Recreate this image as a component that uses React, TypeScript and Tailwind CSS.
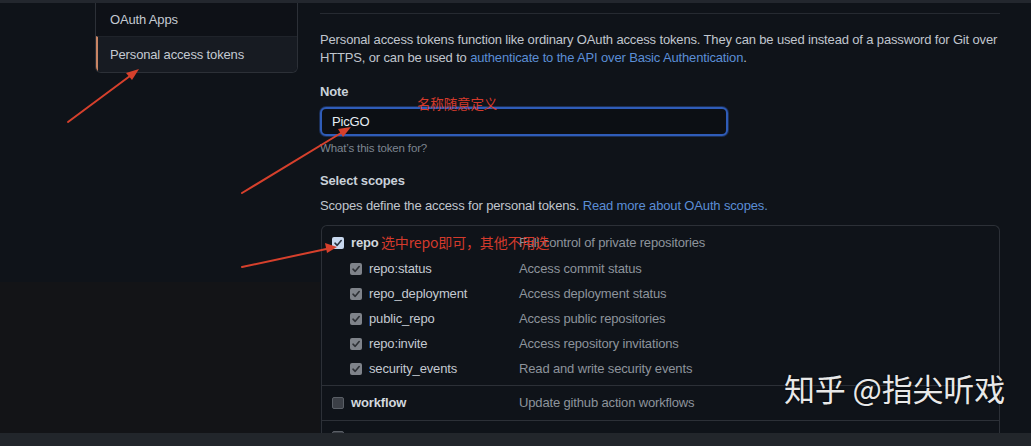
import React from "react";

const font = { fontFamily: '"Segoe UI", "Liberation Sans", "Noto Sans CJK SC", sans-serif' };

function CheckBox({ kind }: { kind: "blue" | "grey" | "empty" }) {
  if (kind === "empty") {
    return <div className="w-[12px] h-[12px] rounded-[2px] bg-[#3b3f46] border border-[#5a5f66]" />;
  }
  const bg = kind === "blue" ? "bg-[#c8d8ee]" : "bg-[#7f838a]";
  const stroke = kind === "blue" ? "#2a3340" : "#2e3136";
  return (
    <div className={`w-[12px] h-[12px] rounded-[2px] ${bg} flex items-center justify-center`}>
      <svg width="10" height="10" viewBox="0 0 10 10">
        <path d="M2 5.2 L4.2 7.3 L8.2 2.6" fill="none" stroke={stroke} strokeWidth="1.6" strokeLinecap="round" strokeLinejoin="round" />
      </svg>
    </div>
  );
}

const subs = [
  ["repo:status", "Access commit status"],
  ["repo_deployment", "Access deployment status"],
  ["public_repo", "Access public repositories"],
  ["repo:invite", "Access repository invitations"],
  ["security_events", "Read and write security events"],
];

export default function App() {
  return (
    <div className="relative w-[1031px] h-[446px] overflow-hidden bg-[#0f1319] text-[#c4cad2] flex flex-col tracking-[-0.15px]" style={font}>
      <div className="h-[3px] bg-[#23272e] shrink-0" />
      <div className="flex-1 flex overflow-hidden">
        {/* left column */}
        <div className="w-[320px] shrink-0 flex flex-col">
          <div className="h-[279px] pl-[95px] pr-[22px]">
            <div className="border border-t-0 border-[#2c3037] rounded-b-[6px] overflow-hidden text-[13px]">
              <div className="h-[33px] flex items-center pl-[14px] bg-[#0e1117] text-[#c4cad2]">OAuth Apps</div>
              <div className="h-[36px] flex items-center pl-[12px] bg-[#171b22] border-t border-[#1f232a] border-l-2 border-l-[#c98564] text-[#c4cad2]">
                Personal access tokens
              </div>
            </div>
          </div>
          <div className="flex-1 bg-[#131417]" />
        </div>
        {/* main */}
        <div className="w-[680px] shrink-0 text-[13px]">
          <div className="mt-[10px] h-px bg-[#262a31]" />
          <p className="mt-[17px] leading-[18px] text-[#c0c6ce] whitespace-nowrap">
            Personal access tokens function like ordinary OAuth access tokens. They can be used instead of a password for Git over
            <br />
            HTTPS, or can be used to <span className="text-[#5b8ed6]">authenticate to the API over Basic Authentication</span>.
          </p>
          <div className="mt-[16px] leading-[18px] font-bold text-[#c9d1d9]">Note</div>
          <div className="mt-[6px] w-[408px] h-[29px] rounded-[6px] border-2 border-[#2f5cb8] bg-[#0c0f14] flex items-center pl-[10px] text-[#e6edf3] shadow-[0_0_0_1px_#1b2f57]">
            PicGO
          </div>
          <div className="mt-[4px] leading-[16px] text-[11.5px] text-[#7d8590]">What’s this token for?</div>
          <div className="mt-[16px] leading-[18px] font-bold text-[#c9d1d9]">Select scopes</div>
          <div className="mt-[7px] leading-[18px] text-[#c0c6ce]">
            Scopes define the access for personal tokens. <span className="text-[#5b8ed6]">Read more about OAuth scopes.</span>
          </div>
          <div className="mt-[10px] ml-px border border-[#2c3037] rounded-t-[6px] border-b-0">
            <div className="h-[30px] pt-[3px] flex items-center pl-[10px]">
              <CheckBox kind="blue" />
              <span className="ml-[7px] font-bold text-[#d2d8de] w-[168px]">repo</span>
              <span className="text-[#8d949c]">Full control of private repositories</span>
            </div>
            {subs.map(([a, b]) => (
              <div key={a} className="h-[25px] flex items-center pl-[28px]">
                <CheckBox kind="grey" />
                <span className="ml-[7px] w-[150px] text-[#c4cad2]">{a}</span>
                <span className="text-[#8d949c]">{b}</span>
              </div>
            ))}
            <div className="h-[4px]" />
            <div className="h-[35px] border-t border-[#2c3037] flex items-center pl-[10px]">
              <CheckBox kind="empty" />
              <span className="ml-[7px] font-bold text-[#d2d8de] w-[168px]">workflow</span>
              <span className="text-[#8d949c]">Update github action workflows</span>
            </div>
            <div className="h-[30px] border-t border-[#2c3037] flex items-start pt-[10px] pl-[10px]">
              <CheckBox kind="empty" />
              <span className="ml-[7px] font-bold text-[#d2d8de] w-[168px]">write:packages</span>
              <span className="text-[#8d949c]">Upload packages to GitHub Package Registry</span>
            </div>
          </div>
        </div>
      </div>
      <div className="h-[13px] bg-[#22262b] shrink-0" />

      {/* annotations overlay */}
      <svg className="absolute inset-0 pointer-events-none" width="1031" height="446">
        <g stroke="#d6402c" strokeWidth="2" fill="#d6402c" strokeLinecap="round">
          <line x1="68" y1="122" x2="134" y2="73" />
          <polygon points="139,69 126,73 132,80" stroke="none" />
          <line x1="242" y1="193" x2="346" y2="130" />
          <polygon points="351,127 338,129 343,137" stroke="none" />
          <line x1="242" y1="267" x2="331" y2="248" />
          <polygon points="337,247 325,243 327,253" stroke="none" />
        </g>
      </svg>
      <div className="absolute left-[381px] top-[232px] text-[14px] leading-[20px] text-[#d33a2c]" style={{ fontFamily: '"Noto Sans CJK SC", sans-serif' }}>
        选中repo即可，其他不用选
      </div>
      <div className="absolute left-[417px] top-[94px] text-[13.5px] leading-[18px] text-[#d33a2c]" style={{ fontFamily: '"Noto Sans CJK SC", sans-serif' }}>
        名称随意定义
      </div>
      <div
        className="absolute left-[784px] top-[368px] text-[31px] leading-[40px] text-[#e8e8e8] [text-shadow:0_0_2px_#000]"
        style={{ fontFamily: '"Noto Sans CJK SC", sans-serif' }}
      >
        知乎 @指尖听戏
      </div>
    </div>
  );
}
